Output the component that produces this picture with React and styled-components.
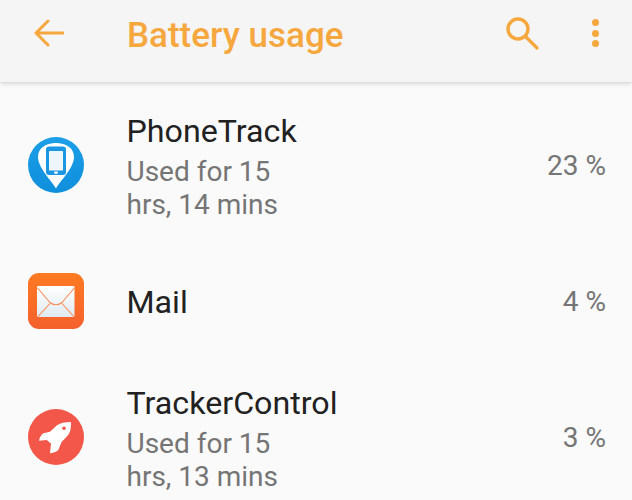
import React from 'react';
import styled, { createGlobalStyle } from 'styled-components';

const GlobalStyle = createGlobalStyle`
  html, body {
    margin: 0;
    padding: 0;
    background: #fafafa;
    overflow: hidden;
  }
  body {
    font-family: Roboto, "Noto Sans", sans-serif;
  }
`;

const Screen = styled.div`
  width: 632px;
  height: 500px;
  overflow: hidden;
  background: #fafafa;
`;

const Toolbar = styled.header`
  height: 82px;
  display: flex;
  align-items: center;
  background: #f5f5f5;
  box-shadow: 0 1px 5px rgba(0, 0, 0, 0.2);
  padding: 0 33px 0 34px;
  color: #f6a83f;
  box-sizing: border-box;
`;

const BackButton = styled.svg`
  width: 30px;
  height: 28px;
  flex: none;
  margin: -16px 63px 0 0;
`;

const Title = styled.h1`
  flex: 1;
  margin: -10px 0 0;
  font-size: 35px;
  line-height: 40px;
  font-weight: 500;
`;

const SearchIcon = styled.svg`
  width: 34px;
  height: 34px;
  flex: none;
  margin: -16px 53px 0 0;
`;

const MenuDots = styled.div`
  display: flex;
  flex-direction: column;
  gap: 3.5px;
  margin: -16px 0 0;
`;

const Dot = styled.span`
  width: 7px;
  height: 7px;
  border-radius: 50%;
  background: currentColor;
`;

const List = styled.ul`
  list-style: none;
  margin: 0;
  padding: 12px 26px 0 28px;
`;

const Row = styled.li`
  display: flex;
  align-items: center;
  height: ${p => (p.$tall ? 142 : 130)}px;
`;

const IconSlot = styled.svg`
  width: 56px;
  height: 56px;
  flex: none;
  margin-right: 42.5px;
`;

const Info = styled.div`
  flex: 1;
  padding-top: 2px;
`;

const Name = styled.div`
  font-size: 32.2px;
  line-height: 40px;
  color: #212121;
`;

const Detail = styled.div`
  width: 190px;
  margin-top: 4px;
  font-size: 28px;
  line-height: 33px;
  color: #757575;
`;

const Percent = styled.div`
  padding-top: 1px;
  font-size: 28px;
  line-height: 33px;
  color: #757575;
`;

function PhoneTrackIcon() {
  return (
    <IconSlot viewBox="0 0 56 56">
      <defs>
        <linearGradient id="pt" x1="0" y1="0" x2="0" y2="1">
          <stop offset="0" stopColor="#1c9ee8" />
          <stop offset="1" stopColor="#0f8fdc" />
        </linearGradient>
      </defs>
      <circle cx="28" cy="28" r="28" fill="url(#pt)" />
      <path d="M28 51.5 C24 44 10 31 10 20 C10 11 18 6 28 6 C38 6 46 11 46 20 C46 31 32 44 28 51.5 Z" fill="#fff" />
      <rect x="18" y="9.5" width="20" height="28.5" rx="3" fill="#1a96e2" />
      <rect x="21" y="14" width="14" height="19.5" rx="0.5" fill="#eef6fc" />
      <rect x="26" y="34.6" width="4" height="2.2" rx="1" fill="#fff" />
    </IconSlot>
  );
}

function MailIcon() {
  return (
    <IconSlot viewBox="0 0 56 56">
      <defs>
        <linearGradient id="ml" x1="0" y1="0" x2="0" y2="1">
          <stop offset="0" stopColor="#fe7a22" />
          <stop offset="1" stopColor="#f4602c" />
        </linearGradient>
        <linearGradient id="pa" x1="0" y1="0" x2="0" y2="1">
          <stop offset="0" stopColor="#ffffff" />
          <stop offset="1" stopColor="#dfeaf2" />
        </linearGradient>
      </defs>
      <rect width="56" height="56" rx="11" fill="url(#ml)" />
      <rect x="9" y="13" width="37.5" height="31" rx="1" fill="url(#pa)" />
      <path d="M9.5 15 L22 29.5 C25 32.5 31 32.5 34 29.5 L46.3 15" fill="none" stroke="#f9894c" strokeWidth="1.1" />
      <path d="M10 43.5 L22 30.5 M45.8 43.5 L34 30.5" fill="none" stroke="#f9894c" strokeWidth="1.1" />
    </IconSlot>
  );
}

function RocketIcon() {
  return (
    <IconSlot viewBox="0 0 56 56">
      <circle cx="28" cy="28" r="28" fill="#f2574a" />
      <path d="M43 13 C37 13 32 14 28.7 16.5 L22 22.7 L15.3 24.3 C13 26 11.5 29 11 31.7 L18.7 31 L23 34.5 L22 44.3 C26 44 29 42.5 30.3 41 L33.7 32.7 C38 29 42 25 42.6 20 C43 17 43 15 43 13 Z" fill="#fff" />
      <circle cx="36" cy="19.3" r="1.8" fill="#f2574a" />
    </IconSlot>
  );
}

export default function App() {
  return (
    <Screen>
      <GlobalStyle />
      <Toolbar>
        <BackButton viewBox="0 0 30 28" fill="none" stroke="currentColor" strokeWidth="3" strokeLinecap="round" strokeLinejoin="round">
          <path d="M2 14 H29 M14 2 L2 14 L14 26" />
        </BackButton>
        <Title>Battery usage</Title>
        <SearchIcon viewBox="0 0 34 34" fill="none" stroke="currentColor" strokeLinecap="round">
          <circle cx="13" cy="13" r="10" strokeWidth="3.4" />
          <path d="M21 21 L32 32" strokeWidth="3.2" />
        </SearchIcon>
        <MenuDots>
          <Dot />
          <Dot />
          <Dot />
        </MenuDots>
      </Toolbar>
      <List>
        <Row $tall>
          <PhoneTrackIcon />
          <Info>
            <Name>PhoneTrack</Name>
            <Detail>Used for 15 hrs, 14 mins</Detail>
          </Info>
          <Percent>23 %</Percent>
        </Row>
        <Row>
          <MailIcon />
          <Info>
            <Name>Mail</Name>
          </Info>
          <Percent>4 %</Percent>
        </Row>
        <Row $tall>
          <RocketIcon />
          <Info>
            <Name>TrackerControl</Name>
            <Detail>Used for 15 hrs, 13 mins</Detail>
          </Info>
          <Percent>3 %</Percent>
        </Row>
      </List>
    </Screen>
  );
}
